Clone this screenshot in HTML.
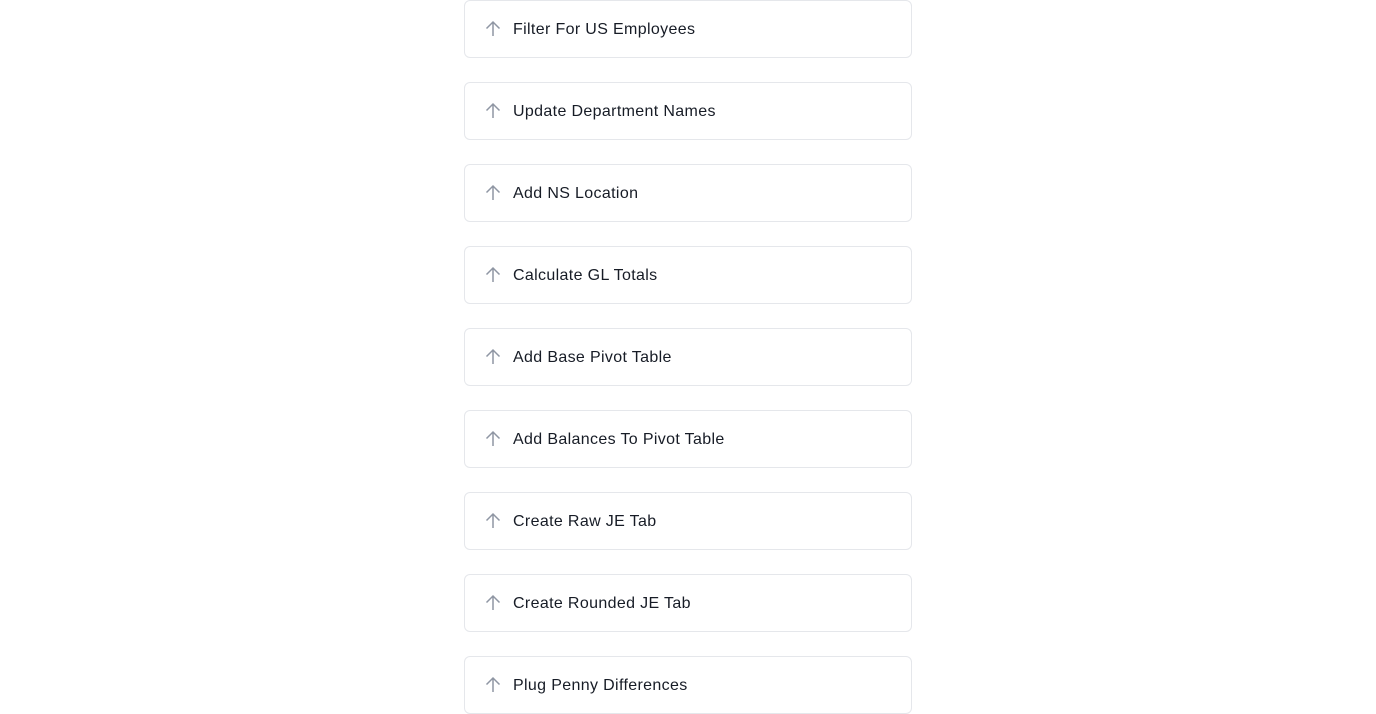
<!DOCTYPE html>
<html><head><style>
body{margin:0;background:#fff;font-family:"Liberation Sans",sans-serif;}
.c{position:absolute;left:464px;width:446px;height:56px;border:1px solid #e5e7eb;border-radius:6px;box-sizing:content-box;}
.c svg{position:absolute;left:19px;top:19px;}
.c span{position:absolute;left:48px;top:19px;font-size:16px;color:#171c26;line-height:20px;letter-spacing:0.35px;}
</style></head><body>
<div class="c" style="top:0"><svg width="18" height="18" viewBox="0 0 18 18"><path d="M9 16V2M2.5 8.5L9 2l6.5 6.5" fill="none" stroke="#8f96a3" stroke-width="1.5"/></svg><span>Filter For US Employees</span></div>
<div class="c" style="top:82px"><svg width="18" height="18" viewBox="0 0 18 18"><path d="M9 16V2M2.5 8.5L9 2l6.5 6.5" fill="none" stroke="#8f96a3" stroke-width="1.5"/></svg><span>Update Department Names</span></div>
<div class="c" style="top:164px"><svg width="18" height="18" viewBox="0 0 18 18"><path d="M9 16V2M2.5 8.5L9 2l6.5 6.5" fill="none" stroke="#8f96a3" stroke-width="1.5"/></svg><span>Add NS Location</span></div>
<div class="c" style="top:246px"><svg width="18" height="18" viewBox="0 0 18 18"><path d="M9 16V2M2.5 8.5L9 2l6.5 6.5" fill="none" stroke="#8f96a3" stroke-width="1.5"/></svg><span>Calculate GL Totals</span></div>
<div class="c" style="top:328px"><svg width="18" height="18" viewBox="0 0 18 18"><path d="M9 16V2M2.5 8.5L9 2l6.5 6.5" fill="none" stroke="#8f96a3" stroke-width="1.5"/></svg><span>Add Base Pivot Table</span></div>
<div class="c" style="top:410px"><svg width="18" height="18" viewBox="0 0 18 18"><path d="M9 16V2M2.5 8.5L9 2l6.5 6.5" fill="none" stroke="#8f96a3" stroke-width="1.5"/></svg><span>Add Balances To Pivot Table</span></div>
<div class="c" style="top:492px"><svg width="18" height="18" viewBox="0 0 18 18"><path d="M9 16V2M2.5 8.5L9 2l6.5 6.5" fill="none" stroke="#8f96a3" stroke-width="1.5"/></svg><span>Create Raw JE Tab</span></div>
<div class="c" style="top:574px"><svg width="18" height="18" viewBox="0 0 18 18"><path d="M9 16V2M2.5 8.5L9 2l6.5 6.5" fill="none" stroke="#8f96a3" stroke-width="1.5"/></svg><span>Create Rounded JE Tab</span></div>
<div class="c" style="top:656px"><svg width="18" height="18" viewBox="0 0 18 18"><path d="M9 16V2M2.5 8.5L9 2l6.5 6.5" fill="none" stroke="#8f96a3" stroke-width="1.5"/></svg><span>Plug Penny Differences</span></div>
</body></html>
